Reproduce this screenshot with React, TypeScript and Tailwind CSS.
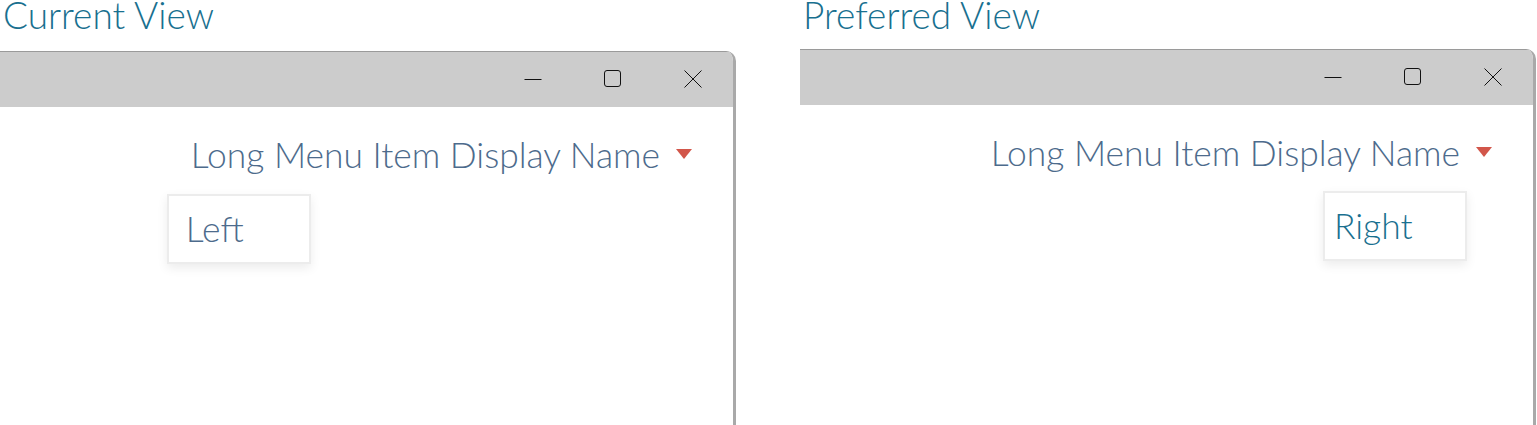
import React from "react";

function Controls() {
  return (
    <div className="flex items-center h-full">
      <svg width="18" height="18" viewBox="0 0 18 18" className="ml-auto mr-[62px] mt-[-2px]">
        <line x1="0.5" y1="9.5" x2="17.5" y2="9.5" stroke="#111" strokeWidth="1" />
      </svg>
      <svg width="18" height="18" viewBox="0 0 18 18" className="mr-[62px] mt-[-2px]">
        <rect x="0.5" y="0.5" width="16" height="16" rx="2.5" fill="none" stroke="#111" strokeWidth="1" />
      </svg>
      <svg width="18" height="18" viewBox="0 0 18 18" className="mr-[31px] mt-[-2px]">
        <path d="M0.5 0.5 L17.5 17.5 M17.5 0.5 L0.5 17.5" stroke="#111" strokeWidth="1" />
      </svg>
    </div>
  );
}

function Panel({
  title,
  item,
  right,
  barTop,
}: {
  title: string;
  item: string;
  right: boolean;
  barTop: string;
}) {
  return (
    <div className="flex flex-col w-[737px]">
      <div className={`text-[37px] leading-[30px] font-light text-[#19708f] pl-[3px] whitespace-nowrap ${barTop}`}>
        {title}
      </div>
      <div className="w-[736px] h-[400px] border-r-[3px] border-[#a9a9a9] rounded-tr-[10px] overflow-hidden bg-white">
        <div className="h-[56px] bg-[#cccccc] border-t border-[#9a9a9a]">
          <Controls />
        </div>
        <div className="flex justify-end pr-[41px] pt-[27px]">
          <div className="relative flex items-center">
            <span className="text-[35.4px] leading-[42px] font-light text-[#4d6b8c] whitespace-nowrap">
              Long Menu Item Display Name
            </span>
            <svg width="16" height="11" viewBox="0 0 16 11" className="ml-[16px] mt-[-2px]">
              <polygon points="0,0 16,0 8,10" fill="#d2564a" />
            </svg>
            <div
              className={`absolute w-[144px] h-[70px] border-2 border-[#ececec] bg-white shadow-[0_4px_10px_rgba(0,0,0,0.08)] flex items-center ${
                right ? "top-[59px] right-[25px] pl-[9px]" : "top-[60px] left-[-24px] pl-[17px]"
              }`}
            >
              <span
                className={`text-[35.4px] leading-[42px] font-light whitespace-nowrap ${
                  right ? "text-[#19708f]" : "text-[#4d6b8c]"
                }`}
              >
                {item}
              </span>
            </div>
          </div>
        </div>
      </div>
    </div>
  );
}

export default function App() {
  return (
    <div
      className="w-[1537px] h-[425px] bg-white overflow-hidden flex gap-[63px]"
      style={{ fontFamily: "Lato, 'Noto Sans', sans-serif" }}
    >
      <Panel title="Current View" item="Left" right={false} barTop="mb-[21px]" />
      <Panel title="Preferred View" item="Right" right={true} barTop="mb-[19px]" />
    </div>
  );
}
